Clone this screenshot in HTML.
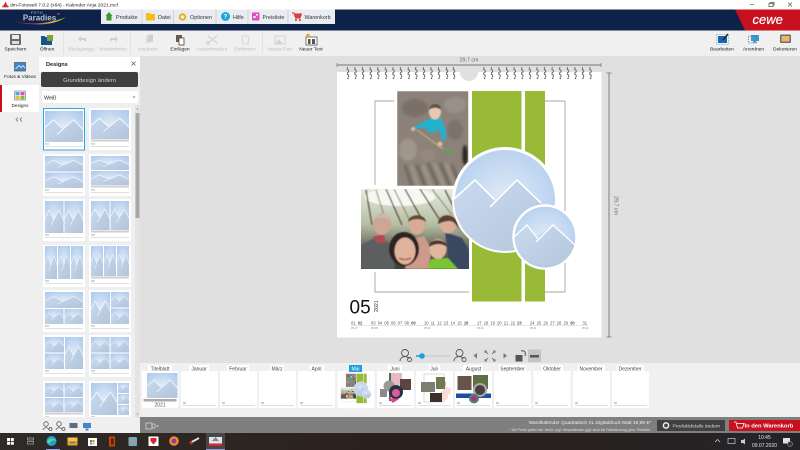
<!DOCTYPE html>
<html lang="de"><head><meta charset="utf-8"><title>dm-Fotowelt</title>
<style>
html,body{margin:0;padding:0;width:800px;height:450px;overflow:hidden;background:#e0e0e0}
svg{display:block;filter:blur(.3px)}
text{font-family:"Liberation Sans",sans-serif}
.tb{font-size:4.9px;fill:#222;text-anchor:middle}
.dis{fill:#bdbdbd}
.tab{font-size:5.4px;fill:#333}
.mo{font-size:5px;fill:#444;text-anchor:middle}
.d{font-size:4.1px;fill:#555}
.u{font-size:2.6px;fill:#888}
</style></head><body>
<svg xmlns="http://www.w3.org/2000/svg" width="800" height="450" viewBox="0 0 800 450">
<defs>
<radialGradient id="g1" cx=".5" cy=".5" r=".7"><stop offset="0" stop-color="#e2ebf7"/><stop offset="1" stop-color="#a9c8ec"/></radialGradient>
<linearGradient id="m1" x1="0" y1="0" x2="1" y2="1"><stop offset="0" stop-color="#c9daf0"/><stop offset="1" stop-color="#b1c4da"/></linearGradient>
<linearGradient id="tk" x1="0" x2="1"><stop offset="0" stop-color="#2e2a28"/><stop offset=".5" stop-color="#2b211c"/><stop offset="1" stop-color="#242428"/></linearGradient>
<linearGradient id="lg" x1="0" x2="1"><stop offset="0" stop-color="#d01f2f"/><stop offset=".4" stop-color="#8a3a8a"/><stop offset=".75" stop-color="#e8c030"/><stop offset="1" stop-color="#40b050"/></linearGradient>
<linearGradient id="sky" x1="0" y1="0" x2="0" y2="1"><stop offset="0" stop-color="#e6ebdf"/><stop offset=".45" stop-color="#b4bda2"/><stop offset=".7" stop-color="#6e6f60"/><stop offset="1" stop-color="#3c3c3a"/></linearGradient>
<filter id="b1"><feGaussianBlur stdDeviation=".5"/></filter>
<filter id="b2"><feGaussianBlur stdDeviation="1.2"/></filter>
<clipPath id="c1"><rect x="397" y="91" width="71.500" height="95"/></clipPath>
<clipPath id="c2"><rect x="361" y="189" width="108" height="80"/></clipPath>
<clipPath id="cb"><circle cx="505" cy="200" r="51"/></clipPath>
<clipPath id="cs"><circle cx="545" cy="237" r="30.500"/></clipPath>
<clipPath id="panel"><rect x="40" y="104" width="95" height="313"/></clipPath>

<symbol id="ph" viewBox="0 0 40 32" preserveAspectRatio="none">
<rect width="40" height="32" fill="url(#g1)"/>
<path d="M0 17 9 9 19 19 30 9 40 19V32H0Z" fill="url(#m1)"/>
<path d="M0 17 9 9 18 18M13 24 30 9 40 19" fill="none" stroke="#fff" stroke-width=".9"/>
</symbol>

<g id="foot"><rect x="0" y="0" width="42" height="42" fill="#fff"/><rect x="2" y="35.500" width="4" height=".9" fill="#aaa"/><rect x="2" y="38" width="38" height=".9" fill="#dcdcdc"/></g>
<g id="bar"><rect x="2" y="31.500" width="38" height="2" fill="#cfcfcf"/></g>
<g id="L1"><use href="#foot"/><use href="#ph" x="2" y="3" width="38" height="31"/></g>
<g id="L1b"><use href="#foot"/><use href="#ph" x="2" y="2" width="38" height="29"/><use href="#bar"/></g>
<g id="L2"><use href="#foot"/><use href="#ph" x="2" y="2" width="38" height="15.500"/><use href="#ph" x="2" y="18.500" width="38" height="15.500"/></g>
<g id="L2b"><use href="#foot"/><use href="#ph" x="2" y="2" width="38" height="14"/><use href="#ph" x="2" y="17" width="38" height="14"/><use href="#bar"/></g>
<g id="L3"><use href="#foot"/><use href="#ph" x="2" y="2" width="18.500" height="32"/><use href="#ph" x="21.500" y="2" width="18.500" height="32"/></g>
<g id="L3b"><use href="#foot"/><use href="#ph" x="2" y="2" width="18.500" height="29"/><use href="#ph" x="21.500" y="2" width="18.500" height="29"/><use href="#bar"/></g>
<g id="L4"><use href="#foot"/><use href="#ph" x="2" y="1" width="12" height="33"/><use href="#ph" x="15" y="1" width="12" height="33"/><use href="#ph" x="28" y="1" width="12" height="33"/></g>
<g id="L4b"><use href="#foot"/><use href="#ph" x="2" y="1" width="12" height="30"/><use href="#ph" x="15" y="1" width="12" height="30"/><use href="#ph" x="28" y="1" width="12" height="30"/><use href="#bar"/></g>
<g id="L5"><use href="#foot"/><use href="#ph" x="2" y="2" width="38" height="16"/><use href="#ph" x="2" y="19" width="18.500" height="15"/><use href="#ph" x="21.500" y="19" width="18.500" height="15"/></g>
<g id="L6"><use href="#foot"/><use href="#ph" x="2" y="2" width="19" height="32"/><use href="#ph" x="22" y="2" width="18" height="15.500"/><use href="#ph" x="22" y="18.500" width="18" height="15.500"/></g>
<g id="L7"><use href="#foot"/><use href="#ph" x="2" y="2" width="19" height="15.500"/><use href="#ph" x="2" y="18.500" width="19" height="15.500"/><use href="#ph" x="22" y="2" width="18" height="32"/></g>
<g id="L8"><use href="#foot"/><use href="#ph" x="2" y="2" width="18.500" height="15.500"/><use href="#ph" x="21.500" y="2" width="18.500" height="15.500"/><use href="#ph" x="2" y="18.500" width="18.500" height="15.500"/><use href="#ph" x="21.500" y="18.500" width="18.500" height="15.500"/></g>
<g id="L9"><use href="#foot"/><use href="#ph" x="2" y="2" width="18.500" height="14"/><use href="#ph" x="21.500" y="2" width="18.500" height="14"/><use href="#ph" x="2" y="17" width="18.500" height="14"/><use href="#ph" x="21.500" y="17" width="18.500" height="14"/><use href="#bar"/></g>
<g id="L10"><use href="#foot"/><use href="#ph" x="2" y="2" width="26" height="32"/><use href="#ph" x="29" y="2" width="11" height="10"/><use href="#ph" x="29" y="13" width="11" height="10"/><use href="#ph" x="29" y="24" width="11" height="10"/></g>

<g id="ring"><path d="M0 0c-1 0-1 2.400 0 2.400s1 2.400 0 2.400-1 2.400 0 2.400 1 2.400 0 2.400" fill="none" stroke="#5c5c5c" stroke-width=".9"/><circle cx="0" cy="10.800" r=".8" fill="#666"/></g>

<g id="p1">
<rect x="397" y="91" width="71.500" height="95" fill="#8c8279"/>
<g clip-path="url(#c1)">
<g filter="url(#b2)">
<ellipse cx="415" cy="108" rx="13" ry="9" fill="#7a7068"/>
<ellipse cx="455" cy="105" rx="11" ry="8" fill="#9a9087"/>
<ellipse cx="408" cy="150" rx="9" ry="11" fill="#a0968c"/>
<ellipse cx="455" cy="130" rx="8" ry="10" fill="#7c7269"/>
<ellipse cx="428" cy="155" rx="8" ry="6" fill="#96897e"/>
<path d="M405 165 412 186M417 165 425 186M428 163 438 186M440 163 450 186M452 165 460 186" stroke="#6a615a" stroke-width="2.500"/>
<path d="M411 165 418 186M423 165 431 186M434 163 444 186M446 163 455 186" stroke="#a39a8e" stroke-width="2.500"/>
<ellipse cx="465" cy="155" rx="2.500" ry="10" fill="#22201e"/>
</g>
<g filter="url(#b1)">
<path d="M412 128 425 121 432 118H441L446 130V139L442 141 439 128 437 132H428L424 127 413 130Z" fill="#20b2cc"/>
<ellipse cx="435" cy="112" rx="6" ry="7.500" fill="#e6c8b4"/>
<path d="M429 110c1-8 12-8 12 0-3-3-9-3-12 0Z" fill="#5e5248"/>
<path d="M417 130 443 149" stroke="#c0a878" stroke-width="1.200"/>
<path d="M443 148 457 155 447 153Z" fill="#49b04a"/>
<circle cx="413" cy="129" r="2" fill="#dcb8a0"/>
<circle cx="440" cy="144" r="2.500" fill="#dcb8a0"/>
</g>
</g>
</g>

<g id="p2">
<rect x="361" y="189" width="108" height="80" fill="url(#sky)"/>
<g clip-path="url(#c2)">
<g filter="url(#b1)">
<ellipse cx="400" cy="197" rx="35" ry="9" fill="#f6f8f2"/>
<path d="M366 190 372 225M386 189 402 225M405 189 425 225M420 189 445 228M445 190 455 210" stroke="#5d5644" stroke-width="1.300"/>
<path d="M394 189 412 225M432 189 452 215M376 190 384 215" stroke="#8a8468" stroke-width="1"/>
<path d="M361 245 378 236 392 245 395 269H361Z" fill="#5b5f60"/>
<path d="M372 237 384 234 386 243 378 243Z" fill="#b04a55"/>
<path d="M410 240 424 236 432 250 428 269H405Z" fill="#cd9a8c"/>
<path d="M445 232 462 238 469 250V269H450Z" fill="#3a4660"/>
<ellipse cx="382" cy="224" rx="9" ry="11" fill="#cfa593"/>
<path d="M373 220c1-8 17-8 18 0-5-3-13-3-18 0Z" fill="#c4bab0"/>
<ellipse cx="417" cy="225" rx="8" ry="9.500" fill="#d8ab96"/>
<path d="M408 222c1-9 17-9 18 0-5-4-13-4-18 0Z" fill="#5c4838"/>
<ellipse cx="448" cy="224" rx="8" ry="9.500" fill="#d9ae98"/>
<path d="M438 224c0-12 19-12 20 2l2 6c-3-7-6-11-11-11-5 0-8 2-11 3Z" fill="#5a4030"/>
<ellipse cx="404" cy="249" rx="15" ry="17" fill="#2f2420"/>
<ellipse cx="405" cy="251" rx="10.500" ry="13.500" fill="#e0b39c"/>
<path d="M399 258c4 2 8 2 12 0" stroke="#a5584f" stroke-width="1.300" fill="none"/>
<ellipse cx="438" cy="249" rx="8.500" ry="10" fill="#e1b79e"/>
<path d="M429 247c0-9 17-9 18 0-5-4-12-4-18 0Z" fill="#4a3526"/>
<path d="M427 269 431 259 448 258 458 269Z" fill="#7cc435"/>
</g></g>
</g>

<g id="page">
<rect x="337" y="72" width="264.500" height="265.500" fill="#fff"/>
<path d="M375 185V101H394M565 101V292M375 272V292H469M545 292H565M525 101H565" stroke="#b59e9e" stroke-width=".9" fill="none"/>
<use href="#p1"/><use href="#p2"/>
<rect x="397" y="91" width="71.500" height="95" fill="none" stroke="#fff" stroke-width=".5"/>
<rect x="472" y="91" width="49.500" height="210.500" fill="#98ba36"/>
<rect x="525" y="91" width="20" height="210.500" fill="#98ba36"/>
<circle cx="505" cy="200" r="51.500" fill="url(#g1)" stroke="#fff" stroke-width="3"/>
<g clip-path="url(#cb)">
<path d="M454 199 475 180 495 200 517 180 560 222V260H454Z" fill="url(#m1)"/>
<path d="M454 199 475 180 495 200M490 207 517 180 541 203" stroke="#fff" stroke-width="1.600" fill="none"/>
</g>
<circle cx="545" cy="237" r="31.500" fill="url(#g1)" stroke="#fff" stroke-width="2.500"/>
<g clip-path="url(#cs)">
<path d="M514 237 527 225 537 237 553 225 578 246V270H514Z" fill="url(#m1)"/>
<path d="M514 237 527 225 538 239M536 242 553 225 575 245" stroke="#fff" stroke-width="1.300" fill="none"/>
</g>
</g>
</defs>

<!-- title bar -->
<rect width="800" height="10" fill="#fff"/>
<path d="M3 7 5.500 1.500 8 7Z" fill="#d8262c"/><rect x="2.500" y="5.500" width="6" height="1.800" fill="#d8262c"/>
<text x="10" y="6.700" font-size="4.900" fill="#222">dm-Fotowelt 7.0.2 (x64) - Kalender Anja 2021.mcf</text>
<path d="M750 4.500H754" stroke="#666" stroke-width=".7"/>
<path d="M769 3.500H773V6.500H769ZM770 3V2.500H774V5.500" fill="none" stroke="#555" stroke-width=".8"/>
<path d="M788 2.500 792 6.500M792 2.500 788 6.500" stroke="#555" stroke-width=".7"/>

<!-- navy header -->
<rect y="9.500" width="800" height="21" fill="#0d2149"/>
<path d="M735 9.500H800V30.500H745Z" fill="#c9101f"/>
<text x="752.500" y="24" font-size="13" font-style="italic" fill="#fff" stroke="#fff" stroke-width=".2">cewe</text>
<text x="37" y="14" font-size="3.600" fill="#c9ced8" text-anchor="middle" letter-spacing=".6">FOTO</text>
<text x="39.500" y="20.500" font-size="8" font-weight="bold" fill="#b9c2d2" text-anchor="middle">Paradies</text>
<path d="M13 21C30 25 50 24 66 17 56 25 34 27 13 21Z" fill="url(#lg)"/>
<path d="M56.500 14.500 58.500 12.500 60.500 14.500Z" fill="#d04040"/>

<rect x="101" y="9.500" width="234" height="14.500" fill="#e9edf1"/>
<path d="M142 9.500V24M173.500 9.500V24M216 9.500V24M248 9.500V24M288 9.500V24" stroke="#c8ccd2" stroke-width=".8"/>
<path d="M105.500 16 109 12 112.500 16H111.500V20.500H106.500V16Z" fill="#3c9a2e"/><text x="116" y="19" class="tab">Produkte</text>
<path d="M146 13H150L151 14H155V20.500H146Z" fill="#f5bd18"/><text x="158" y="19" class="tab">Datei</text>
<circle cx="182.500" cy="17" r="2.800" fill="none" stroke="#e8b420" stroke-width="2"/><text x="190" y="19" class="tab">Optionen</text>
<circle cx="225.500" cy="16.500" r="4.500" fill="#19a8dc"/><text x="225.500" y="18.700" font-size="6" font-weight="bold" fill="#fff" text-anchor="middle">?</text><text x="233" y="19" class="tab">Hilfe</text>
<rect x="252" y="12.500" width="7.500" height="8" rx="1" fill="#e04bc0"/><rect x="253.500" y="16" width="2" height="2" fill="#fff"/><rect x="256" y="14" width="2" height="1.500" fill="#fff"/><text x="262.500" y="19" class="tab">Preisliste</text>
<path d="M292 13H294L295.500 18H300L301.500 14H294.500" fill="#e0433a" stroke="#d8322c" stroke-width=".9"/><circle cx="296" cy="20" r="1" fill="#c33"/><circle cx="300" cy="20" r="1" fill="#c33"/><text x="304.500" y="19" class="tab">Warenkorb</text>

<!-- toolbar -->
<rect y="30.500" width="800" height="26" fill="#f0f0f0"/>
<path d="M63.500 32V54M130.500 32V54M262.500 32V54" stroke="#dcdcdc" stroke-width=".7"/>
<rect x="10" y="34" width="11" height="11" rx="1" fill="#6a6a6a"/><rect x="12" y="35" width="7" height="4" fill="#ececec"/><rect x="12" y="41" width="7" height="3" fill="#ddd"/>
<rect x="41" y="37" width="11" height="8" fill="#17548f"/><rect x="47" y="35" width="6" height="6" fill="#7aa62e"/><path d="M41 37V36H45V37Z" fill="#17548f"/>
<path d="M78 39 81 36V38H86V42L84 40H81V42Z" fill="#d0d0d0"/>
<path d="M118 39 115 36V38H110V42L112 40H115V42Z" fill="#d0d0d0"/>
<rect x="146" y="36" width="5" height="7" fill="#dcdcdc"/><rect x="148" y="34.500" width="5" height="7" fill="#d0d0d0"/>
<rect x="176" y="35" width="6" height="7" fill="#6b5a48"/><rect x="179" y="38" width="5" height="7" fill="#fff" stroke="#444" stroke-width=".8"/>
<path d="M208 43 217 36M208 36 217 43" stroke="#d2d2d2" stroke-width="1.200"/><circle cx="208" cy="43" r="1.500" fill="none" stroke="#d2d2d2"/>
<path d="M242 36H249L248 44H243Z" fill="none" stroke="#d6d6d6"/>
<rect x="275" y="36" width="10" height="8" fill="none" stroke="#d4d4d4"/><path d="M275 44 279 39 283 44Z" fill="#d4d4d4"/>
<rect x="306" y="37" width="11" height="8" fill="#fff" stroke="#555" stroke-width=".8"/><rect x="308" y="39" width="2.500" height="5" fill="#555"/><rect x="312" y="39" width="3" height="5" fill="#555"/><circle cx="308" cy="35.500" r="1.800" fill="#e0a820"/>
<text x="15.500" y="50.500" class="tb">Speichern</text>
<text x="47" y="50.500" class="tb">Öffnen</text>
<text x="81" y="50.500" class="tb dis">Rückgängig</text>
<text x="113" y="50.500" class="tb dis">Wiederholen</text>
<text x="148" y="50.500" class="tb dis">Kopieren</text>
<text x="180" y="50.500" class="tb">Einfügen</text>
<text x="212" y="50.500" class="tb dis">Ausschneiden</text>
<text x="245" y="50.500" class="tb dis">Entfernen</text>
<text x="280" y="50.500" class="tb dis">Neues Foto</text>
<text x="311" y="50.500" class="tb">Neuer Text</text>
<rect x="718" y="36" width="9" height="7" fill="#1b66b0"/><rect x="716.500" y="34.500" width="12" height="10" fill="none" stroke="#7ab6e4" stroke-width=".8" stroke-dasharray="1.500 1"/><path d="M723 40 728 34" stroke="#222" stroke-width="1.400"/>
<rect x="751" y="35" width="8" height="6" fill="#3e9ad8"/><rect x="748.500" y="36" width="8" height="7" fill="none" stroke="#555" stroke-width=".7" stroke-dasharray="1 1"/><rect x="753" y="41" width="3" height="1.500" fill="#3e9ad8"/>
<rect x="780" y="34.500" width="11" height="8.500" rx="1" fill="#6d6d6d"/><rect x="781.500" y="36" width="8" height="5.500" fill="#f0b667"/>
<text x="722" y="50.500" class="tb">Bearbeiten</text>
<text x="753.500" y="50.500" class="tb">Anordnen</text>
<text x="785" y="50.500" class="tb">Dekorieren</text>

<!-- canvas bg -->
<rect x="140" y="56" width="660" height="307" fill="#e0e0e0"/>

<!-- left strip -->
<rect y="56" width="140" height="377" fill="#efefef"/>
<rect x="39" y="57" width="101" height="14.500" fill="#fff"/>
<rect x="1" y="85" width="38" height="27" fill="#fff"/>
<rect x="0" y="85" width="2" height="27" fill="#c9101f"/>
<rect x="14.500" y="62.500" width="11" height="8.500" fill="#3f87c6" stroke="#555" stroke-width=".7"/><path d="M15.500 69 19 65.500 21 67.500 23 65.500 25 68" stroke="#fff" stroke-width=".7" fill="none"/>
<text x="20" y="78" font-size="4.700" fill="#222" text-anchor="middle">Fotos &amp; Videos</text>
<rect x="14.500" y="91" width="11" height="9" fill="#f4f4f4" stroke="#777" stroke-width=".6"/><rect x="15.500" y="92" width="4" height="3.300" fill="#58a3d0"/><rect x="20.500" y="92" width="4" height="3.300" fill="#e04bc0"/><rect x="15.500" y="96" width="4" height="3.300" fill="#e8c030"/><rect x="20.500" y="96" width="4" height="3.300" fill="#86b83a"/>
<text x="20" y="106.800" font-size="4.700" fill="#222" text-anchor="middle">Designs</text>
<path d="M18 117.500 16 119.500 18 121.500M22 117.500 20 119.500 22 121.500" fill="none" stroke="#666" stroke-width=".7"/>

<!-- panel -->
<text x="46" y="66" font-size="5.600" font-weight="bold" fill="#222">Designs</text>
<path d="M131.500 61.500 135.500 65.500M135.500 61.500 131.500 65.500" stroke="#666" stroke-width=".8"/>
<rect x="41" y="72" width="97" height="15" rx="2" fill="#3f3f3f"/>
<text x="89.500" y="82" font-size="5.800" fill="#cfcfcf" text-anchor="middle">Grunddesign ändern</text>
<rect x="42" y="91" width="96" height="12" rx="1" fill="#fff"/>
<text x="44" y="99.500" font-size="5.400" fill="#222">Weiß</text>
<path d="M132.500 96.500H135.500L134 98Z" fill="#777"/>
<g clip-path="url(#panel)">
<use href="#L1" x="43" y="108"/><use href="#L1b" x="89" y="108" />
<use href="#L2" x="43" y="154"/><use href="#L2b" x="89" y="154"/>
<use href="#L3" x="43" y="199"/><use href="#L3b" x="89" y="199"/>
<use href="#L4" x="43" y="245"/><use href="#L4b" x="89" y="245"/>
<use href="#L5" x="43" y="290"/><use href="#L6" x="89" y="290"/>
<use href="#L7" x="43" y="335"/><use href="#L8" x="89" y="335"/>
<use href="#L9" x="43" y="381"/><use href="#L10" x="89" y="381"/>
</g>
<rect x="43.500" y="108.500" width="41" height="41.500" fill="none" stroke="#29a9e0" stroke-width="1"/>
<rect x="135" y="105" width="5" height="313" fill="#e4e4e4"/>
<rect x="135.500" y="113" width="4" height="105" fill="#a8a8a8"/>
<path d="M137.500 108 136.500 109.500H138.500Z M137.500 415 136.500 413.500H138.500Z" fill="#888"/>
<g fill="none" stroke="#555" stroke-width=".8"><circle cx="46" cy="424" r="2.300"/><path d="M43 430C43 427 49 427 49 430"/><circle cx="50.500" cy="429" r="1.500"/><circle cx="59" cy="424" r="2.300"/><path d="M56 430C56 427 62 427 62 430"/><circle cx="63.500" cy="429" r="1.500"/></g>
<rect x="69.500" y="423" width="8" height="5" fill="#5a6f85"/><rect x="83" y="423" width="8" height="5" fill="#3f87c6"/><rect x="85.500" y="428.500" width="3" height="2" fill="#3f87c6"/>

<!-- ruler & page -->
<text x="469" y="61.500" font-size="5.300" fill="#666" text-anchor="middle">29,7 cm</text>
<path d="M337 65H601" stroke="#999" stroke-width="1.500"/><path d="M337 63V67M601 63V67" stroke="#777" stroke-width=".7"/>
<path d="M609 72.500V337" stroke="#a0a0a0" stroke-width="1.500"/><path d="M606.500 73H611.500M606.500 337H611.500" stroke="#777" stroke-width=".7"/>
<text transform="translate(614.500 205.500) rotate(90)" font-size="5.300" fill="#666" text-anchor="middle">29,7 cm</text>
<use href="#page"/>
<path d="M460 72A9 9 0 0 0 478 72Z" fill="#e0e0e0"/>
<g>
<use href="#ring" x="348" y="67.500"/><use href="#ring" x="355.500" y="67.500"/><use href="#ring" x="363" y="67.500"/><use href="#ring" x="370.800" y="67.500"/><use href="#ring" x="378.300" y="67.500"/><use href="#ring" x="386" y="67.500"/><use href="#ring" x="393.500" y="67.500"/><use href="#ring" x="401" y="67.500"/><use href="#ring" x="408.800" y="67.500"/><use href="#ring" x="416.300" y="67.500"/><use href="#ring" x="424" y="67.500"/><use href="#ring" x="431.500" y="67.500"/><use href="#ring" x="439" y="67.500"/><use href="#ring" x="447" y="67.500"/><use href="#ring" x="454" y="67.500"/>
<use href="#ring" x="484.500" y="67.500"/><use href="#ring" x="492" y="67.500"/><use href="#ring" x="499.500" y="67.500"/><use href="#ring" x="507.200" y="67.500"/><use href="#ring" x="514.700" y="67.500"/><use href="#ring" x="522.300" y="67.500"/><use href="#ring" x="530" y="67.500"/><use href="#ring" x="537.500" y="67.500"/><use href="#ring" x="545" y="67.500"/><use href="#ring" x="552.700" y="67.500"/><use href="#ring" x="560.300" y="67.500"/><use href="#ring" x="568" y="67.500"/><use href="#ring" x="575.500" y="67.500"/><use href="#ring" x="583" y="67.500"/><use href="#ring" x="590.500" y="67.500"/>
</g>
<text x="349.500" y="313.500" font-size="19" fill="#111">05</text>
<text transform="translate(378 312) rotate(-90)" font-size="5.300" fill="#333">2021</text>
<text x="351" y="324.500" class="d" word-spacing="1">01 <tspan font-weight="bold">02</tspan></text>
<text x="371" y="324.500" class="d" word-spacing="1">03 04 05 06 07 08 <tspan font-weight="bold">09</tspan></text>
<text x="424" y="324.500" class="d" word-spacing="1">10 11 12 13 14 15 <tspan font-weight="bold">16</tspan></text>
<text x="477" y="324.500" class="d" word-spacing="1">17 18 19 20 21 22 <tspan font-weight="bold">23</tspan></text>
<text x="530" y="324.500" class="d" word-spacing="1">24 25 26 27 28 29 <tspan font-weight="bold">30</tspan></text>
<text x="582.500" y="324.500" class="d">31</text>
<path d="M351 325.500H588" stroke="#ccc" stroke-width=".6"/>
<text x="351" y="329" class="u">05.17</text><text x="371" y="329" class="u">05.18</text><text x="424" y="329" class="u">05.19</text><text x="477" y="329" class="u">05.20</text><text x="530" y="329" class="u">05.21</text><text x="582" y="329" class="u">05.22</text>

<!-- controls -->
<g fill="none" stroke="#555" stroke-width=".9"><circle cx="405" cy="353" r="3.500"/><path d="M400 361C400 356 408 355 409 359"/><circle cx="409.500" cy="359.500" r="2"/><circle cx="459.500" cy="353" r="3.500"/><path d="M454 361C454 356 462 355 463 359"/><circle cx="464" cy="359.500" r="2"/></g>
<path d="M416 356H450" stroke="#d0d0d0" stroke-width="1.500"/><path d="M416 356H422" stroke="#1a9ee0" stroke-width="1.500"/>
<circle cx="422" cy="356" r="2.800" fill="#1a9ee0"/>
<path d="M477 353V358.500L473.500 355.700Z" fill="#777"/><path d="M503.500 353V358.500L507 355.700Z" fill="#777"/>
<g fill="none" stroke="#777" stroke-width=".9"><path d="M485 351 488 354M485 353V351H487M495 351 492 354M495 353V351H493M485 361 488 358M485 359V361H487M495 361 492 358M495 359V361H493"/></g>
<rect x="515.500" y="355" width="7" height="6.500" fill="#555"/><path d="M521 351C525 350 526 353 525 356" fill="none" stroke="#555"/>
<rect x="528" y="349.500" width="13" height="12.500" fill="#c4c4c4"/><rect x="530" y="355" width="9" height="2.500" fill="#555"/>

<!-- filmstrip -->
<rect x="140" y="363" width="660" height="54" fill="#f0f0f0"/>
<g fill="#fff">
<rect x="142" y="371" width="36.500" height="37"/><rect x="181" y="371" width="37" height="37"/><rect x="220" y="371" width="37" height="37"/><rect x="259" y="371" width="37" height="37"/><rect x="298" y="371" width="37" height="37"/><rect x="337.500" y="371" width="37" height="37"/><rect x="377" y="371" width="37" height="37"/><rect x="416" y="371" width="37" height="37"/><rect x="455" y="371" width="37" height="37"/><rect x="494" y="371" width="37" height="37"/><rect x="533.500" y="371" width="37" height="37"/><rect x="573" y="371" width="37" height="37"/><rect x="612" y="371" width="37" height="37"/>
</g>
<use href="#ph" x="147" y="373" width="30.500" height="25"/>
<rect x="143.500" y="399" width="33" height="2.500" fill="#aaa"/>
<text x="160" y="406.500" font-size="5" fill="#555" text-anchor="middle">2021</text>
<g fill="#cfcfcf">
<rect x="183" y="405" width="33" height=".7"/><rect x="222" y="405" width="33" height=".7"/><rect x="261" y="405" width="33" height=".7"/><rect x="300" y="405" width="33" height=".7"/><rect x="339" y="405" width="33" height=".7"/><rect x="379" y="405" width="33" height=".7"/><rect x="418" y="405" width="33" height=".7"/><rect x="457" y="405" width="33" height=".7"/><rect x="496" y="405" width="33" height=".7"/><rect x="535" y="405" width="33" height=".7"/><rect x="575" y="405" width="33" height=".7"/><rect x="614" y="405" width="33" height=".7"/>
</g>
<g fill="#999">
<rect x="183" y="402.500" width="3" height="1"/><rect x="222" y="402.500" width="3" height="1"/><rect x="261" y="402.500" width="3" height="1"/><rect x="300" y="402.500" width="3" height="1"/><rect x="339" y="402.500" width="3" height="1"/><rect x="379" y="402.500" width="3" height="1"/><rect x="418" y="402.500" width="3" height="1"/><rect x="457" y="402.500" width="3" height="1"/><rect x="496" y="402.500" width="3" height="1"/><rect x="535" y="402.500" width="3" height="1"/><rect x="575" y="402.500" width="3" height="1"/><rect x="614" y="402.500" width="3" height="1"/>
</g>
<!-- Mai mini -->
<g transform="translate(337.500 371) scale(.1402 .1402) translate(-337 -72)"><use href="#page"/></g>
<!-- Juni -->
<g>
<rect x="389" y="373" width="2" height="28" fill="#3a7a3a"/><rect x="391" y="373" width="11" height="12" fill="#e8b8c8"/>
<rect x="400" y="379" width="11" height="11" fill="#5a4540"/><rect x="380" y="389" width="7" height="8" fill="#8a8a8a"/>
<circle cx="389" cy="386" r="5.500" fill="#999"/><circle cx="396" cy="392" r="7" fill="#2a3040"/><circle cx="396" cy="393" r="4" fill="#d85aa0"/>
<path d="M388 398 399 399 393 403Z" fill="#e040a0"/>
</g>
<!-- Juli -->
<g>
<rect x="424" y="374" width="20" height="28" fill="none" stroke="#d8b8b8" stroke-width=".6"/>
<circle cx="443" cy="396" r="5" fill="#f6ddd5"/><circle cx="447" cy="391" r="4" fill="#f6ddd5"/><circle cx="441" cy="384" r="5" fill="#c9a0a8"/>
<rect x="421" y="382" width="14" height="10" fill="#7d7d70"/><rect x="436" y="377" width="9" height="12" fill="#6f7a50"/><rect x="430" y="393" width="12" height="9" fill="#3a302c"/>
</g>
<!-- August -->
<g>
<rect x="457.500" y="376" width="14" height="14" fill="#6a5348"/><rect x="473" y="375" width="15" height="14" fill="#5e6f42"/>
<rect x="456" y="393.500" width="35" height="4.500" fill="#1e4ea8"/>
<circle cx="480" cy="390" r="7" fill="#aaa"/><circle cx="480" cy="390" r="5" fill="#4a3e3e"/>
<circle cx="474" cy="398.500" r="5" fill="#4f8a5a"/><circle cx="474" cy="398.500" r="2.800" fill="#b02a9a"/>
</g>
<!-- month labels -->
<g fill="#fff">
<rect x="148" y="365" width="24" height="7"/><rect x="189" y="365" width="20" height="7"/><rect x="227" y="365" width="22" height="7"/><rect x="270" y="365" width="14" height="7"/><rect x="310" y="365" width="14" height="7"/><rect x="388" y="365" width="14" height="7"/><rect x="429" y="365" width="11" height="7"/><rect x="463" y="365" width="20" height="7"/><rect x="499" y="365" width="27" height="7"/><rect x="541" y="365" width="22" height="7"/><rect x="578" y="365" width="27" height="7"/><rect x="617" y="365" width="27" height="7"/>
</g>
<rect x="349" y="365" width="13" height="7" fill="#1a9ee0"/>
<text x="160" y="370.500" class="mo">Titelblatt</text><text x="199" y="370.500" class="mo">Januar</text><text x="238" y="370.500" class="mo">Februar</text><text x="277" y="370.500" class="mo">März</text><text x="316.500" y="370.500" class="mo">April</text><text x="355.500" y="370.500" class="mo" style="fill:#fff">Mai</text><text x="395" y="370.500" class="mo">Juni</text><text x="434" y="370.500" class="mo">Juli</text><text x="473.500" y="370.500" class="mo">August</text><text x="512.500" y="370.500" class="mo">September</text><text x="552" y="370.500" class="mo">Oktober</text><text x="591" y="370.500" class="mo">November</text><text x="630" y="370.500" class="mo">Dezember</text>

<!-- bottom bar -->
<rect x="140" y="417" width="660" height="16" fill="#7f7f7f"/>
<rect x="146" y="423" width="6" height="6" fill="none" stroke="#ddd" stroke-width=".7"/><rect x="152" y="424" width="3" height="4" fill="none" stroke="#ddd" stroke-width=".6"/><path d="M156 425.500H159L157.500 427Z" fill="#ddd"/>
<text x="651" y="424" font-size="4.850" fill="#eee" text-anchor="end">Wandkalender Quadratisch XL Digitaldruck Matt 19,95 €*</text>
<text x="651" y="431" font-size="3.300" fill="#ddd" text-anchor="end">* Die Preise gelten inkl. MwSt. zzgl. Versandkosten (ggf. auch bei Filialabholung) gem. Preisliste.</text>
<rect x="657" y="420" width="68" height="11" fill="#404040"/>
<circle cx="666" cy="425.500" r="2.600" fill="none" stroke="#eee" stroke-width="1.500"/>
<text x="672.500" y="427.500" font-size="4.900" fill="#ddd">Produktdetails ändern</text>
<rect x="729" y="420" width="71" height="11" fill="#c9101f"/>
<path d="M734 422H736L737.500 428H742.500L744 423.500H737" fill="none" stroke="#fff" stroke-width=".8"/>
<text x="744.500" y="427.700" font-size="5.800" font-weight="bold" fill="#fff">In den Warenkorb</text>

<!-- taskbar -->
<rect y="433" width="800" height="17" fill="url(#tk)"/>
<g fill="#fff"><rect x="7" y="438" width="3" height="3"/><rect x="10.800" y="438" width="3" height="3"/><rect x="7" y="441.800" width="3" height="3"/><rect x="10.800" y="441.800" width="3" height="3"/></g>
<rect x="27.500" y="438" width="6" height="2" fill="none" stroke="#aaa" stroke-width=".7"/><rect x="27.500" y="441.500" width="6" height="2.500" fill="none" stroke="#aaa" stroke-width=".7"/>
<circle cx="51.500" cy="441" r="5" fill="#1aa0d8"/><path d="M47 442C48 438 54 437 56.500 441 55 440 50 440 49.500 444Z" fill="#6fd07a"/>
<rect x="46" y="449" width="14" height="1" fill="#8d9be8"/>
<rect x="67.500" y="437.500" width="10" height="8" fill="#f5c33c"/><rect x="67.500" y="441" width="10" height="4.500" fill="#dda02a"/><rect x="70" y="442" width="5" height="1" fill="#2a7dc8"/>
<rect x="88" y="438" width="9" height="8" fill="#fff"/><rect x="90" y="440" width="2" height="2" fill="#e8452a"/><rect x="92.500" y="440" width="2" height="2" fill="#68b82c"/><rect x="90" y="442.500" width="2" height="2" fill="#2a9fe0"/><rect x="92.500" y="442.500" width="2" height="2" fill="#f3b92a"/>
<rect x="109" y="436.500" width="6" height="10" fill="#d83b01"/><rect x="111" y="438.500" width="2.500" height="6" fill="#2d2a28"/>
<rect x="128.500" y="437" width="8.500" height="9" rx="1" fill="#6fa8c8"/><path d="M131 439 135 441.500 131 444Z" fill="#f08a2a"/>
<rect x="148.500" y="436.500" width="10" height="9.500" fill="#fff"/><path d="M150.500 438H156.500V441L153.500 444.500 150.500 441Z" fill="#d8232e"/>
<circle cx="174" cy="441" r="4.800" fill="#f08a28"/><circle cx="174" cy="441" r="2.400" fill="#8a38b8"/>
<path d="M190 443 199 438" stroke="#ddd" stroke-width="2"/><circle cx="191" cy="443" r="1.500" fill="#d8232e"/>
<rect x="206" y="433" width="19" height="17" fill="#4a4644"/>
<rect x="209" y="437" width="13" height="8" fill="#dde4ea"/><path d="M212 441 215.500 437 219 441Z" fill="#7a8a9a"/><rect x="209" y="443.500" width="13" height="2.500" fill="#d8232e"/>
<rect x="206" y="449" width="19" height="1" fill="#8d9be8"/>
<path d="M715 442 717.500 439.500 720 442" fill="none" stroke="#ddd" stroke-width=".7"/>
<rect x="728" y="438.500" width="7" height="5" fill="none" stroke="#ccc" stroke-width=".7"/>
<path d="M741 440H743L745 438.500V444.500L743 443H741Z" fill="#ccc"/>
<text x="764.500" y="439" font-size="5" fill="#e4e4e4" text-anchor="middle">10:45</text>
<text x="764.500" y="447" font-size="5" fill="#e4e4e4" text-anchor="middle">09.07.2020</text>
<rect x="783" y="438" width="7" height="5.500" fill="#e0e0e0"/><circle cx="790" cy="444" r="2.500" fill="#333" stroke="#bbb" stroke-width=".5"/>
</svg>
</body></html>
